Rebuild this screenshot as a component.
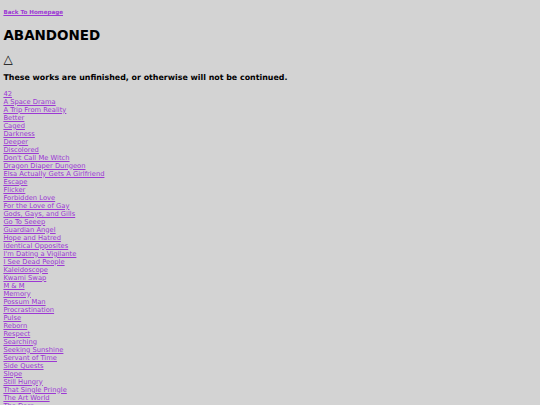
const works = [
  "42",
  "A Space Drama",
  "A Trip From Reality",
  "Better",
  "Caged",
  "Darkness",
  "Deeper",
  "Discolored",
  "Don't Call Me Witch",
  "Dragon Diaper Dungeon",
  "Elsa Actually Gets A Girlfriend",
  "Escape",
  "Flicker",
  "Forbidden Love",
  "For the Love of Gay",
  "Gods, Gays, and Gills",
  "Go To Seeep",
  "Guardian Angel",
  "Hope and Hatred",
  "Identical Opposites",
  "I'm Dating a Vigilante",
  "I See Dead People",
  "Kaleidoscope",
  "Kwami Swap",
  "M & M",
  "Memory",
  "Possum Man",
  "Procrastination",
  "Pulse",
  "Reborn",
  "Respect",
  "Searching",
  "Seeking Sunshine",
  "Servant of Time",
  "Side Quests",
  "Slope",
  "Still Hungry",
  "That Single Pringle",
  "The Art World",
  "The Dare",
];

export default function App() {
  return (
    <div className="h-[405px] overflow-hidden bg-[#d3d3d3] px-[3.4px] pt-[5px] font-['DejaVu_Sans',sans-serif] text-black">
      <div className="leading-[7px]">
        <a href="#" className="text-[5.6px] font-bold text-[#9c38d4] underline">
          Back To Homepage
        </a>
      </div>
      <h1 className="mt-[10.5px] text-[13.5px] font-bold leading-[16px]">ABANDONED</h1>
      <div className="mt-[10px] text-[12px] leading-[12px]">△</div>
      <h3 className="mt-[8px] text-[7.9px] font-bold leading-[10px]">
        These works are unfinished, or otherwise will not be continued.
      </h3>
      <ul className="mt-[7px]">
        {works.map((w) => (
          <li key={w} className="text-[6.75px] leading-[8px]">
            <a href="#" className="text-[#9c38d4] underline">
              {w}
            </a>
          </li>
        ))}
      </ul>
    </div>
  );
}
